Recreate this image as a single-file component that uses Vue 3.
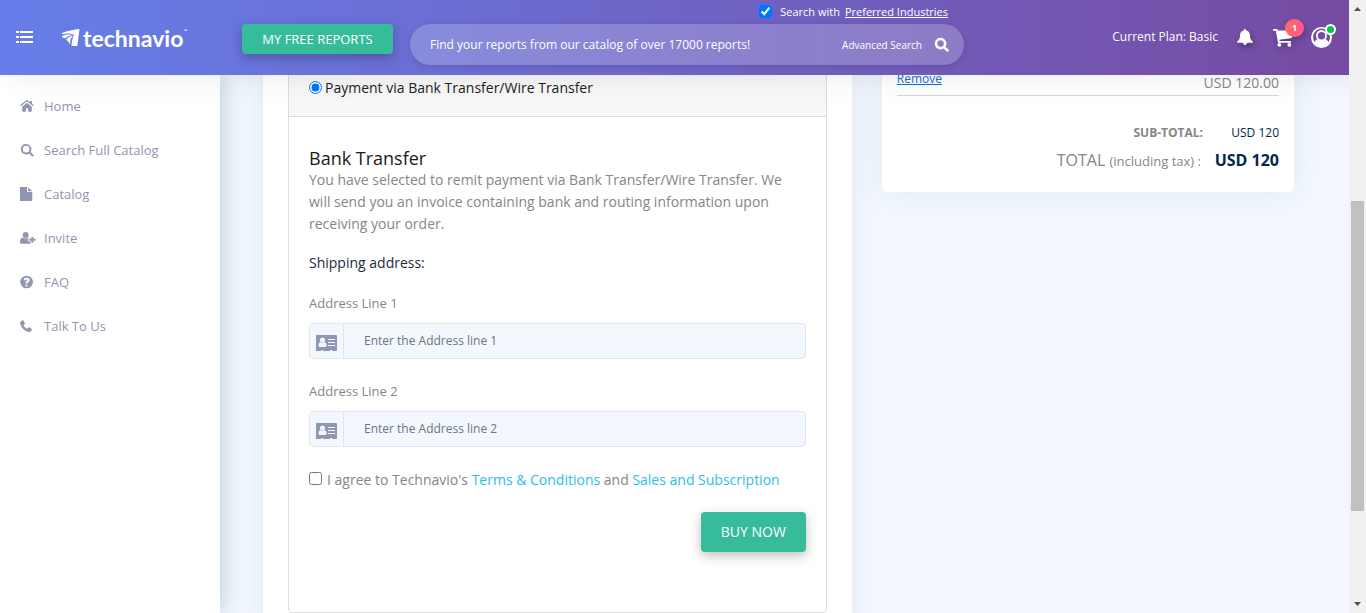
<script setup>
import { ref } from 'vue'

const icons = {
  home: 'M1.100 8.300 8 2.600l6.900 5.700 1-1.100L13.600 5.300V2.200h-2.200v1.300L9 1.600c-.6-.5-1.400-.5-2 0L.1 7.200zM2.500 8.900V13.700c0 .4.3.8.8.8H6.700v-3.900h2.600v3.900h3.400c.4 0 .8-.4.8-.8V8.900L8 4.400z',
  search: 'M7 1a6 6 0 1 0 3.300 11L13.500 15.200a1.100 1.100 0 0 0 1.700-1.700L12 10.300A6 6 0 0 0 7 1zm0 2.200a3.800 3.800 0 1 1 0 7.600 3.800 3.800 0 0 1 0-7.600z',
  file: 'M0 0h8v5.500h6V16H0zM9.200.2 13.800 4.500H9.200z',
  invite: 'M6.500 1a3.400 3.400 0 1 1 0 6.900 3.400 3.400 0 0 1 0-6.900zM3.400 7.500c1.900 1.500 4.300 1.500 6.200 0 .7 0 1.300.3 1.700.8H9v3.400h3v2.600c-.3.200-.6.3-1 .3H2c-1.300 0-2-.8-2-2.100 0-2.500.8-4.900 3.400-5zM13 6.500h2.200v2.400h2.500v2.200H15.200v2.400H13v-2.400h-2.500V8.900H13z',
  faq: 'M7.500.8a7.200 7.200 0 1 0 0 14.400A7.200 7.200 0 0 0 7.500.8zM6.300 11h2.300v2.100H6.300zM4.200 5.800C4.500 3.900 5.800 2.900 7.700 2.900c1.900 0 3.300 1.100 3.300 2.800 0 1.500-.8 2.100-1.600 2.600-.6.300-.8.600-.8 1.500H6.300c0-1.800.5-2.400 1.500-3 .6-.4.700-.6.700-.9 0-.5-.4-.8-1-.8s-.9.4-1.200 1.200z',
  phone: 'M3.400 1.300 1.300 2.200C.1 3 0 4.800.5 6.400c1.200 3.900 4.300 7 8.200 8.200 1.700.5 3.500.2 4.200-.8l.7-2.200c0-.6-3.100-2.400-3.600-2.300-.6.100-1.200 1.600-1.800 1.600C6.900 10.700 4.300 8.200 4 7c0-.6 1.600-1.200 1.700-1.700.1-.6-1.700-4-2.300-4z',
}

const menu = [
  { label: 'Home', icon: 'home' },
  { label: 'Search Full Catalog', icon: 'search' },
  { label: 'Catalog', icon: 'file' },
  { label: 'Invite', icon: 'invite' },
  { label: 'FAQ', icon: 'faq' },
  { label: 'Talk To Us', icon: 'phone' },
]

const preferred = ref(true)
const method = ref('wire')
const agreed = ref(false)
const query = ref('')
const fields = ref([
  { id: 'address1', label: 'Address Line 1', placeholder: 'Enter the Address line 1', value: '' },
  { id: 'address2', label: 'Address Line 2', placeholder: 'Enter the Address line 2', value: '' },
])
</script>

<template>
  <div class="shell">
    <div class="page">
      <header class="topbar">
        <button class="icon-btn menu-btn" aria-label="Toggle menu">
          <svg width="17" height="13" viewBox="0 0 17 13" fill="#fff">
            <path d="M0 0h3v2H0zM4 0h13v2H4zM0 5h3v2H0zM4 5h13v2H4zM0 10h3v2H0zM4 10h13v2H4z" />
          </svg>
        </button>
        <a class="logo" href="#">
          <svg width="18" height="18" viewBox="0 0 18 18" fill="#fff">
            <path d="M0 4C5.500 1.800 11.500.6 17.500 0L15.300 17H9.600C9.600 12.800 10.400 9 12 5.800 8.500 4.300 4 4.300 0 5.300z" />
            <path d="M0 7C3.500 5.600 7 5.200 10.600 6 7.500 6.600 5 7.800 3.200 9.600 2.300 8.900 1.200 8.400 0 8.200z" />
            <path d="M4.200 10.800C5.800 8.700 8 7.200 11 6.500 9 8.700 8 11.500 8 15.500 7 13.500 5.800 12 4.200 10.800z" />
          </svg>
          <span>technavio</span><small>™</small>
        </a>
        <button class="green-btn reports-btn">MY FREE REPORTS</button>
        <div class="finder">
          <div class="preferred">
            <input id="preferred" v-model="preferred" type="checkbox" />
            <label for="preferred">Search with</label>
            <a href="#">Preferred Industries</a>
          </div>
          <form class="search" @submit.prevent>
            <input v-model="query" type="text" aria-label="Find reports" placeholder="Find your reports from our catalog of over 17000 reports!" />
            <a href="#">Advanced Search</a>
            <button class="icon-btn" aria-label="Search">
              <svg width="15" height="15" viewBox="0 0 16 16" fill="#fff" stroke="#fff" stroke-width=".5"><path :d="icons.search" /></svg>
            </button>
          </form>
        </div>
        <span class="plan">Current Plan: Basic</span>
        <button class="icon-btn bell" aria-label="Notifications">
          <svg width="16" height="17" viewBox="0 0 16 17" fill="#fff">
            <path d="M7 1.200C7 .4 7.400 0 8 0s1 .4 1 1.200c2.500.5 4 2.400 4 5 0 3.600 1 5.200 2.800 6.300.3.500.2 1.300-.5 1.300H.7c-.7 0-.8-.8-.5-1.300C2 11.400 3 9.800 3 6.200c0-2.600 1.500-4.500 4-5zM6 13.500h4c0 1.600-.9 2.500-2 2.500s-2-.9-2-2.500z" />
          </svg>
        </button>
        <button class="icon-btn cart" aria-label="Cart">
          <svg width="20" height="18" viewBox="0 0 20 18" fill="#fff">
            <path d="M.6 0h3.200c.6 0 .8.500 1 1.500H19v7.500L6.300 10.700l.3 1.300H18v1.800H5L2.800 1.800H.6A.9.9 0 0 1 .6 0z" />
            <circle cx="6.300" cy="15.800" r="1.900" /><circle cx="16.300" cy="15.800" r="1.900" />
          </svg>
          <span class="badge">1</span>
        </button>
        <button class="icon-btn user" aria-label="Account">
          <svg width="21" height="21" viewBox="0 0 21 21" fill="#fff" fill-rule="evenodd">
            <path d="M10.500 0a10.500 10.500 0 1 0 0 21 10.500 10.500 0 0 0 0-21zM3.700 15.300A8.700 8.700 0 0 1 5.500 3.300 8.300 8.300 0 0 1 15.500 3.300a8.700 8.700 0 0 1 1.800 12c-.5-1.700-1.500-2.700-2.900-3a5.500 5.500 0 1 0-7.800 0c-1.400.3-2.400 1.300-2.900 3zM10.500 5a3.700 3.700 0 1 1 0 7.400 3.700 3.700 0 0 1 0-7.400z" />
          </svg>
          <span class="dot"></span>
        </button>
      </header>

      <div class="body">
        <nav class="sidebar">
          <a v-for="item in menu" :key="item.label" href="#">
            <svg width="16" height="14" viewBox="0 0 18 16" preserveAspectRatio="xMinYMid meet" fill="#9295b0" fill-rule="evenodd">
              <path :d="icons[item.icon]" />
            </svg>
            {{ item.label }}
          </a>
        </nav>

        <main class="content">
          <section class="card checkout">
            <div class="panel">
              <div class="panel-head">
                <input id="wire" v-model="method" type="radio" name="method" value="wire" />
                <label for="wire">Payment via Bank Transfer/Wire Transfer</label>
              </div>
              <form class="panel-body" @submit.prevent>
                <h2>Bank Transfer</h2>
                <p>You have selected to remit payment via Bank Transfer/Wire Transfer. We will send you an invoice containing bank and routing information upon receiving your order.</p>
                <h3>Shipping address:</h3>
                <div v-for="field in fields" :key="field.id" class="field">
                  <label :for="field.id">{{ field.label }}</label>
                  <div class="input-group">
                    <span class="addon">
                      <svg width="21" height="16" viewBox="0 0 21 16">
                        <path fill="#9295b0" d="M1 0h19a1 1 0 0 1 1 1v14a1 1 0 0 1-1 1h-4v-1h-2v1H7v-1H5v1H1a1 1 0 0 1-1-1V1a1 1 0 0 1 1-1z" />
                        <circle cx="6.500" cy="5" r="2.500" fill="#f3f8ff" />
                        <path fill="#f3f8ff" d="M4.500 7c1.300 1 2.700 1 4 0 1.500.3 2 1.800 2 3.500 0 .9-.4 1.500-1.200 1.500H3.700c-.8 0-1.200-.6-1.200-1.500C2.500 8.800 3 7.300 4.500 7zM12 4h7v1h-7zM12 7h7v1h-7zM12 10h7v1h-7z" />
                      </svg>
                    </span>
                    <input :id="field.id" v-model="field.value" type="text" :placeholder="field.placeholder" />
                  </div>
                </div>
                <div class="agree">
                  <input id="agree" v-model="agreed" type="checkbox" />
                  <span><label for="agree">I agree to Technavio's</label> <a href="#">Terms &amp; Conditions</a> and <a href="#">Sales and Subscription</a></span>
                </div>
                <button class="green-btn buy-btn">BUY NOW</button>
              </form>
            </div>
          </section>

          <aside class="card summary">
            <div class="line-item">
              <a href="#">Remove</a>
              <span>USD 120.00</span>
            </div>
            <dl>
              <div class="subtotal"><dt>SUB-TOTAL:</dt><dd>USD 120</dd></div>
              <div class="total"><dt>TOTAL <small>(including tax) :</small></dt><dd>USD 120</dd></div>
            </dl>
          </aside>
        </main>
      </div>
    </div>

    <div class="scrollbar" aria-hidden="true">
      <svg width="7" height="4" viewBox="0 0 7 4"><path d="M0 4 3.500 0 7 4z" fill="#505050" /></svg>
      <div class="track"><div class="thumb"></div></div>
      <svg width="7" height="4" viewBox="0 0 7 4"><path d="M0 0 3.500 4 7 0z" fill="#505050" /></svg>
    </div>
  </div>
</template>

<style>
body { margin: 0; }
</style>

<style scoped>
.shell {
  display: flex;
  height: 100vh;
  overflow: hidden;
  font: 14px/22px "Open Sans", "Noto Sans", sans-serif;
  color: #868686;
  background: #f3f8ff;
}
.shell * { box-sizing: border-box; }
button, input { font: inherit; margin: 0; }
input[type="checkbox"], input[type="radio"] { width: 13px; height: 13px; flex: none; accent-color: #0075ff; }
.page { flex: 1; min-width: 0; display: flex; flex-direction: column; }

.topbar {
  position: relative;
  z-index: 2;
  display: flex;
  align-items: center;
  flex: none;
  height: 75px;
  padding: 0 16px;
  color: #fff;
  background: linear-gradient(90deg, #667eea, #764ba2);
  box-shadow: 12px 0 30px rgba(0, 0, 0, 0.1);
}
.icon-btn { display: flex; padding: 0; border: 0; background: none; cursor: pointer; }
.logo { display: flex; align-items: center; width: 126px; margin: 0 54px 0 29px; color: #fff; text-decoration: none; font: 700 23px/26px Lato, sans-serif; }
.logo span { margin-left: 3px; }
.logo small { align-self: flex-start; font-size: 5px; line-height: 12px; }
.green-btn {
  border: 0;
  border-radius: 4px;
  color: #fff;
  background: #37bc9b;
  cursor: pointer;
}
.reports-btn { flex: none; width: 151px; height: 30px; margin-top: 3px; padding: 0; font-size: 13px; font-weight: 500; box-shadow: 0 4px 12px rgba(0, 0, 0, 0.25); }
.finder { flex: 0 1 554px; align-self: flex-start; margin-left: 17px; }
.preferred { display: flex; align-items: center; justify-content: flex-end; height: 24px; padding-right: 16px; font-size: 11px; font-weight: 500; }
.preferred input { margin-bottom: 1px; }
.preferred label { margin: 0 5px 0 8px; }
.preferred a { color: #fff; }
.search { display: flex; align-items: center; height: 41px; padding: 0 15px 0 20px; border-radius: 21px; background: rgba(255, 255, 255, 0.2); box-shadow: 0 2px 6px rgba(0, 0, 0, 0.12); }
.search input { flex: 1; min-width: 0; padding: 0; border: 0; outline: 0; color: #fff; background: none; font-size: 12px; font-weight: 500; }
.search input::placeholder { color: #fff; opacity: 1; }
.search a { margin-right: 12px; color: #fff; font-size: 10px; font-weight: 500; text-decoration: none; }
.plan { margin-left: auto; padding-bottom: 2px; font-size: 12px; font-weight: 500; white-space: nowrap; }
.bell { margin-left: 19px; filter: drop-shadow(1px 3px 3px rgba(0, 0, 0, 0.35)); }
.cart { position: relative; margin-left: 20px; filter: drop-shadow(1px 3px 3px rgba(0, 0, 0, 0.25)); }
.badge { position: absolute; top: -10px; left: 12px; width: 19px; height: 18px; border-radius: 9px; background: linear-gradient(90deg, #ff6b6b, #ff5789); color: #fff; font-size: 9px; font-weight: 700; line-height: 18px; }
.user { position: relative; margin: 0 1px 1px 18px; }
.dot { position: absolute; top: -3px; right: -4px; width: 11px; height: 11px; border: 2px solid #fff; border-radius: 50%; background: #00c941; }

.body { display: flex; flex: 1; min-height: 0; }
.sidebar { flex: none; width: 220px; padding-top: 9px; background: #fff; box-shadow: 4px 0 20px rgba(69, 101, 120, 0.26); }
.sidebar a { display: flex; align-items: center; height: 44px; padding-left: 20px; color: #9295b0; font-size: 13px; text-decoration: none; }
.sidebar svg { margin-right: 8px; }

.content { flex: 1; display: grid; grid-template-columns: 10fr 7fr; gap: 30px; align-items: start; min-width: 0; padding: 0 55px 0 43px; }
.card { position: relative; margin-top: -10px; background: #fff; border-radius: 5px; box-shadow: 0 0 30px rgba(69, 90, 120, 0.1); }
.checkout { padding: 0 25px 25px; }
.panel { border: 1px solid #dbdbdb; border-radius: 4px; }
.panel-head { display: flex; align-items: center; height: 51px; padding: 0 20px 6px; border-bottom: 1px solid #dbdbdb; background: #f7f7f7; color: #212121; }
.panel-head input { margin-bottom: 2px; }
.panel-head label { margin-left: 3px; }
.panel-body { display: flex; flex-direction: column; padding: 30px 20px 60px; }
h2, h3, p, dl, dd { margin: 0; }
h2 { color: #1a1a1a; font-size: 18px; font-weight: 400; }
h3 { margin-top: 17px; color: #1b2b3c; font-size: 14px; font-weight: 400; }
.field { margin-top: 22px; }
h3 + .field { margin-top: 19px; }
.field > label { display: block; margin-bottom: 10px; font-size: 13px; line-height: 20px; }
.input-group { display: flex; height: 36px; border: 1px solid #e4e7ea; border-radius: 4px; background: #f3f8ff; overflow: hidden; }
.addon { display: flex; align-items: center; justify-content: center; width: 34px; padding-top: 3px; border-right: 1px solid #e4e7ea; }
.input-group input { flex: 1; min-width: 0; padding: 0 20px; border: 0; outline: 0; background: none; color: #6c757d; font-size: 12px; }
.input-group input::placeholder { color: #6c757d; opacity: 1; }
.agree { display: flex; align-items: center; margin: 22px 0 21px; }
.agree input { margin-bottom: 3px; }
.agree span { margin-left: 5px; }
.agree a { color: #30bde8; text-decoration: none; }
.buy-btn { align-self: flex-end; width: 105px; height: 40px; padding: 0; font-weight: 500; box-shadow: 0 4px 12px rgba(0, 0, 0, 0.25); }

.summary { padding: 0 15px 15px; }
.line-item { display: flex; align-items: flex-end; justify-content: space-between; height: 31px; border-bottom: 1px solid #d6d6d6; }
.line-item a { padding-bottom: 5px; color: #0d6fd8; font-size: 12px; }
.line-item span { line-height: 24px; }
dl { padding-top: 26px; }
dl div { display: flex; justify-content: flex-end; align-items: baseline; }
dt { text-align: right; }
dd { width: 76px; text-align: right; color: #04284b; }
.subtotal { font-size: 12px; }
.subtotal dt { font-weight: 700; }
.total { font-size: 16px; line-height: 32px; }
.total small { font-size: 13px; }
.total dd { width: 78px; font-weight: 700; }

.scrollbar { position: relative; z-index: 3; display: flex; flex-direction: column; align-items: center; flex: none; width: 17px; padding: 7px 0; background: #f1f1f1; }
.track { display: flex; flex-direction: column; flex: 1; width: 13px; padding: 184px 0 85px; margin: 6px 0; }
.thumb { flex: 1; background: #c1c1c1; }
</style>
